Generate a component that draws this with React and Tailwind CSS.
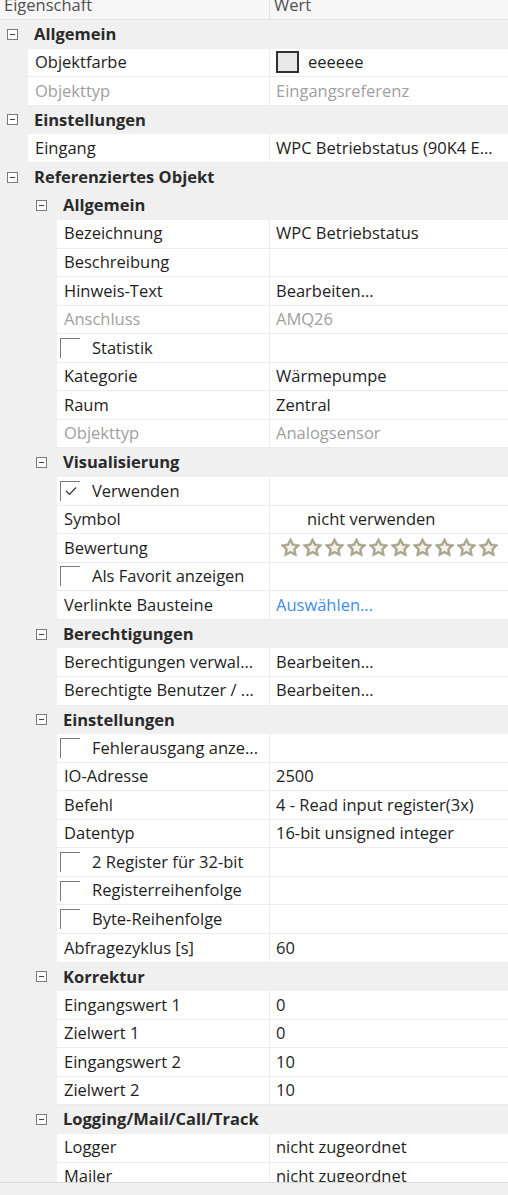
import React from 'react';

const rows = [
    { group: true, level: 0, label: 'Allgemein' },
    { level: 0, name: 'Objektfarbe', value: 'eeeeee', swatch: true },
    { level: 0, name: 'Objekttyp', value: 'Eingangsreferenz', disabled: true },
    { group: true, level: 0, label: 'Einstellungen' },
    { level: 0, name: 'Eingang', value: 'WPC Betriebstatus (90K4 E...' },
    { group: true, level: 0, label: 'Referenziertes Objekt' },
    { group: true, level: 1, label: 'Allgemein' },
    { level: 1, name: 'Bezeichnung', value: 'WPC Betriebstatus' },
    { level: 1, name: 'Beschreibung', value: '' },
    { level: 1, name: 'Hinweis-Text', value: 'Bearbeiten...' },
    { level: 1, name: 'Anschluss', value: 'AMQ26', disabled: true },
    { level: 1, name: 'Statistik', checkbox: true },
    { level: 1, name: 'Kategorie', value: 'Wärmepumpe' },
    { level: 1, name: 'Raum', value: 'Zentral' },
    { level: 1, name: 'Objekttyp', value: 'Analogsensor', disabled: true },
    { group: true, level: 1, label: 'Visualisierung' },
    { level: 1, name: 'Verwenden', checkbox: true, checked: true },
    { level: 1, name: 'Symbol', value: 'nicht verwenden', indentValue: true },
    { level: 1, name: 'Bewertung', stars: true },
    { level: 1, name: 'Als Favorit anzeigen', checkbox: true },
    { level: 1, name: 'Verlinkte Bausteine', value: 'Auswählen...', link: true },
    { group: true, level: 1, label: 'Berechtigungen' },
    { level: 1, name: 'Berechtigungen verwal...', value: 'Bearbeiten...' },
    { level: 1, name: 'Berechtigte Benutzer / ...', value: 'Bearbeiten...' },
    { group: true, level: 1, label: 'Einstellungen' },
    { level: 1, name: 'Fehlerausgang anze...', checkbox: true },
    { level: 1, name: 'IO-Adresse', value: '2500' },
    { level: 1, name: 'Befehl', value: '4 - Read input register(3x)' },
    { level: 1, name: 'Datentyp', value: '16-bit unsigned integer' },
    { level: 1, name: '2 Register für 32-bit', checkbox: true },
    { level: 1, name: 'Registerreihenfolge', checkbox: true },
    { level: 1, name: 'Byte-Reihenfolge', checkbox: true },
    { level: 1, name: 'Abfragezyklus [s]', value: '60' },
    { group: true, level: 1, label: 'Korrektur' },
    { level: 1, name: 'Eingangswert 1', value: '0' },
    { level: 1, name: 'Zielwert 1', value: '0' },
    { level: 1, name: 'Eingangswert 2', value: '10' },
    { level: 1, name: 'Zielwert 2', value: '10' },
    { group: true, level: 1, label: 'Logging/Mail/Call/Track' },
    { level: 1, name: 'Logger', value: 'nicht zugeordnet' },
    { level: 1, name: 'Mailer', value: 'nicht zugeordnet' },
];

const MinusBox = () => (
    <div className="w-[11px] h-[11px] border border-[#7a7a7a] bg-white flex items-center justify-center shrink-0">
        <div className="w-[5px] h-px bg-[#404040]" />
    </div>
);

const CheckBox = ({ checked }) => (
    <div className="relative w-[20px] h-[20px] border-t border-l border-[#7a7a7a] shrink-0">
        {checked && (
            <svg className="absolute left-[4px] top-[4px]" width="12" height="10" viewBox="0 0 12 10">
                <path d="M1 5 L4.5 8.5 L11 1.5" fill="none" stroke="#333" strokeWidth="1.2" />
            </svg>
        )}
    </div>
);

// fat rating star, grey-beige rim with a light centre
const Star = () => (
    <svg width="21" height="21" viewBox="0 0 20 20">
        <path
            d="M10 1 L12.82 6.62 L19.03 7.56 L14.57 11.98 L15.58 18.19 L10 15.3 L4.42 18.19 L5.43 11.98 L0.97 7.56 L7.18 6.62 Z"
            fill="#aca590"
            stroke="#aca590"
            strokeWidth="0.8"
            strokeLinejoin="round"
        />
        <path
            d="M10 5.3 L11.55 8.36 L14.95 8.89 L12.51 11.32 L13.06 14.71 L10 13.14 L6.94 14.71 L7.49 11.32 L5.05 8.89 L8.45 8.36 Z"
            fill="#f3f1ea"
        />
    </svg>
);

const GroupRow = ({ row }) => (
    <div className="h-[28.575px] flex items-center shrink-0 bg-[#f0f0f0]">
        <div className={`flex items-center ${row.level === 0 ? 'pl-[7px]' : 'pl-[36px]'}`}>
            <MinusBox />
        </div>
        <span className="ml-[16px] font-bold text-[#2a2a2a] whitespace-nowrap">
            {row.label}
        </span>
    </div>
);

const ItemRow = ({ row }) => {
    const indent = row.level === 0 ? 'w-[28px]' : 'w-[57px]';
    const nameWidth = row.level === 0 ? 'w-[242px]' : 'w-[213px]';
    const textColor = row.disabled ? 'text-[#a0a0a0]' : 'text-[#1e1e1e]';

    let valueCell = null;
    if (row.swatch) {
        valueCell = (
            <div className="flex items-center gap-[9px]">
                <div className="w-[23px] h-[22px] border-2 border-[#303030] bg-[#e8e8e8]" />
                <span className={textColor}>{row.value}</span>
            </div>
        );
    } else if (row.stars) {
        valueCell = (
            <div className="flex items-center gap-[1px] pl-[4px]">
                {Array.from({ length: 10 }).map((_, i) => (
                    <Star key={i} />
                ))}
            </div>
        );
    } else if (row.value) {
        valueCell = (
            <span
                className={`whitespace-nowrap ${row.link ? 'text-[#3d8ee8]' : textColor} ${
                    row.indentValue ? 'pl-[31px]' : ''
                }`}
            >
                {row.value}
            </span>
        );
    }

    return (
        <div className="h-[28.575px] flex shrink-0 bg-[#f0f0f0]">
            <div className={`${indent} shrink-0`} />
            <div className="flex-1 flex bg-white border-b border-[#ebebeb]">
                <div
                    className={`${nameWidth} shrink-0 flex items-center border-r border-[#ebebeb] overflow-hidden whitespace-nowrap`}
                >
                    {row.checkbox ? (
                        <div className="flex items-center pl-[3px] gap-[12px]">
                            <CheckBox checked={row.checked} />
                            <span className={textColor}>{row.name}</span>
                        </div>
                    ) : (
                        <span className={`pl-[7px] ${textColor}`}>{row.name}</span>
                    )}
                </div>
                <div className="flex-1 flex items-center pl-[6px] overflow-hidden">
                    {valueCell}
                </div>
            </div>
        </div>
    );
};

export default function App() {
    return (
        <div
            className="w-[508px] h-[1195px] overflow-hidden flex flex-col bg-[#f0f0f0] text-[16.5px] leading-none"
            style={{ fontFamily: '"Open Sans", "Noto Sans", sans-serif' }}
        >
            <div className="h-[20px] shrink-0 flex bg-[#f7f7f7] border-b border-[#e2e2e2] overflow-hidden text-[#505050]">
                <div className="w-[270px] shrink-0 border-r border-[#e2e2e2] pl-[4px]">
                    <span className="block -mt-[3px]">Eigenschaft</span>
                </div>
                <div className="flex-1 pl-[4px]">
                    <span className="block -mt-[3px]">Wert</span>
                </div>
            </div>
            <div className="flex-1 flex flex-col overflow-hidden">
                {rows.map((row, i) =>
                    row.group ? <GroupRow key={i} row={row} /> : <ItemRow key={i} row={row} />
                )}
            </div>
            <div className="h-[13px] shrink-0 bg-[#f0f0f0] border-t border-[#dadada]" />
        </div>
    );
}
